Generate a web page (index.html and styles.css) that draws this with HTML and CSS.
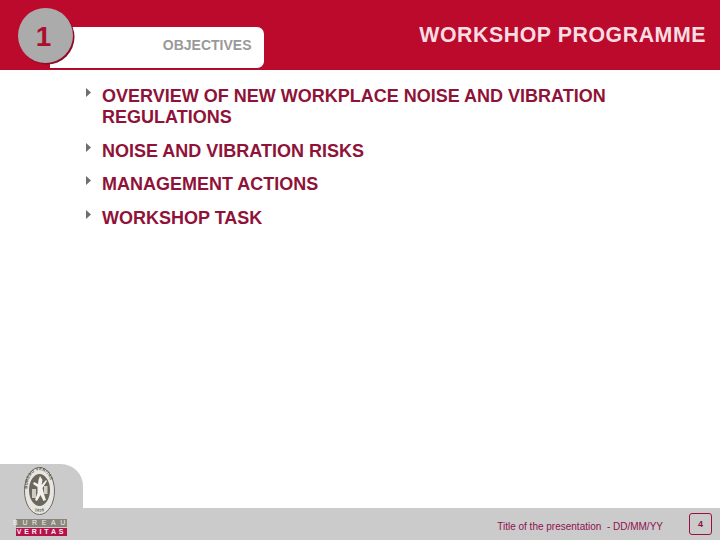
FILE: index.html
```html
<!DOCTYPE html>
<html lang="en">
<head>
<meta charset="utf-8">
<title>Workshop programme</title>
<link rel="stylesheet" href="styles.css">
</head>
<body>
<div class="slide">
  <header class="banner">
    <div class="tab"><span class="tab-label">OBJECTIVES</span></div>
    <div class="badge">1</div>
    <h1 class="title">WORKSHOP PROGRAMME</h1>
  </header>
  <ul class="items">
    <li class="item"><svg class="arrow" width="5" height="9" viewBox="0 0 5 9"><path d="M0 0L5 4.500L0 9Z"/></svg><span>OVERVIEW OF NEW WORKPLACE NOISE AND VIBRATION REGULATIONS</span></li>
    <li class="item"><svg class="arrow" width="5" height="9" viewBox="0 0 5 9"><path d="M0 0L5 4.500L0 9Z"/></svg><span>NOISE AND VIBRATION RISKS</span></li>
    <li class="item"><svg class="arrow" width="5" height="9" viewBox="0 0 5 9"><path d="M0 0L5 4.500L0 9Z"/></svg><span>MANAGEMENT ACTIONS</span></li>
    <li class="item"><svg class="arrow" width="5" height="9" viewBox="0 0 5 9"><path d="M0 0L5 4.500L0 9Z"/></svg><span>WORKSHOP TASK</span></li>
  </ul>
  <footer class="footer">
    <div class="logo-panel">
      <svg class="seal" width="31" height="48" viewBox="0 0 31 48">
        <defs>
          <path id="seal-top" d="M3.200 24C3.200 11 8.500 3.200 15.500 3.200C22.500 3.200 27.800 11 27.800 24"/>
          <path id="seal-bottom" d="M8 42.500C11 45.300 20 45.300 23 42.500"/>
        </defs>
        <ellipse cx="15.500" cy="24" rx="15" ry="23.500" fill="#e6e5e0" stroke="#6f6b62" stroke-width="1"/>
        <ellipse cx="15.500" cy="23" rx="10.500" ry="16" fill="#6b675d"/>
        <text class="seal-text"><textPath href="#seal-top" startOffset="4%">BUREAU VERITAS</textPath></text>
        <text class="seal-text seal-year"><textPath href="#seal-bottom" startOffset="18%">1828</textPath></text>
        <path d="M16 9L18.500 13L17.500 18L22 13L23 14L18.500 21L20 27L22 33L19.500 34L16.500 28L13 34L11 33L13.500 26L13.500 20L9 17L10 15L14 17L14.500 13Z" fill="#f2f1ec"/>
        <path d="M8 22H12V31H8ZM20 19H23.500V27H20Z" fill="#cfcdc6"/>
      </svg>
      <div class="word word-grey">BUREAU</div>
      <div class="word word-red">VERITAS</div>
    </div>
    <div class="footer-bar">
      <span class="footer-text">Title of the presentation&nbsp; - DD/MM/YY</span>
      <span class="page-box">4</span>
    </div>
  </footer>
</div>
</body>
</html>
```
FILE: styles.css
```css
* { box-sizing: border-box; }
html, body { margin: 0; padding: 0; }
body { font-family: "Liberation Sans", Arial, sans-serif; background: #fff; }
.slide { position: relative; width: 720px; height: 540px; overflow: hidden; display: flex; flex-direction: column; background: #fff; }
.banner { position: relative; flex: none; height: 70px; background: #bb0a2b; display: flex; justify-content: flex-end; align-items: flex-start; padding: 22px 14px 0 0; }
.title { margin: 0; font-size: 21.33px; line-height: 26px; font-weight: 700; color: #f9dde3; letter-spacing: 0.55px; white-space: nowrap; }
.tab { position: absolute; left: 50px; top: 27px; width: 214px; height: 42px; background: #fff; border-bottom: 1px solid #a50a2a; border-radius: 0 7px 7px 0; display: flex; align-items: center; justify-content: flex-end; padding: 0 12.500px 6px 0; }
.tab-label { font-size: 14px; font-weight: 700; color: #999; }
.badge { position: absolute; left: 18px; top: 8px; width: 55px; height: 55px; border-radius: 50%; background: #ababab; box-shadow: 1.5px 1.5px 0 #8f0a26; color: #ab0f2e; font-size: 28px; font-weight: 700; display: flex; align-items: center; justify-content: center; padding: 3px 4px 0 0; }
.items { flex: 1; list-style: none; margin: 0; padding: 16px 100px 0 86px; }
.item { display: flex; font-size: 18px; line-height: 21px; font-weight: 700; color: #8f1238; margin-bottom: 12.600px; }
.arrow { flex: none; margin: 2px 11px 0 0; fill: #6e6e6e; }
.footer { position: relative; flex: none; height: 76px; }
.footer-bar { position: absolute; left: 0; right: 0; bottom: 0; height: 32px; background: #cbcbcb; display: flex; align-items: center; justify-content: flex-end; padding: 0 8px 0 0; }
.footer-text { font-size: 10px; color: #8f1050; margin-right: 26px; padding-top: 4px; }
.page-box { width: 23px; height: 22px; border: 1.5px solid #9c1040; border-radius: 3px; color: #8f1040; font-size: 9px; font-weight: 700; display: flex; align-items: center; justify-content: center; }
.logo-panel { position: absolute; z-index: 1; left: 0; top: 0; width: 83px; height: 76px; background: #cbcbcb; border-radius: 0 22px 0 0; display: flex; flex-direction: column; align-items: center; padding: 3px 0 0 0; }
.seal { flex: none; margin: 0 5px 4px 0; }
.seal-text { font-size: 4.200px; font-weight: 700; fill: #55524a; letter-spacing: 0.25px; }
.seal-year { font-size: 4px; }
.word { width: 51px; height: 8px; display: flex; align-items: center; justify-content: center; font-size: 7px; line-height: 8px; letter-spacing: 3.6px; color: #f4f2ec; white-space: nowrap; font-weight: 700; }
.word-grey { background: #8a857a; margin-bottom: 1px; letter-spacing: 4.600px; font-weight: 400; }
.word-red { background: #b5124d; letter-spacing: 2.8px; }
```
